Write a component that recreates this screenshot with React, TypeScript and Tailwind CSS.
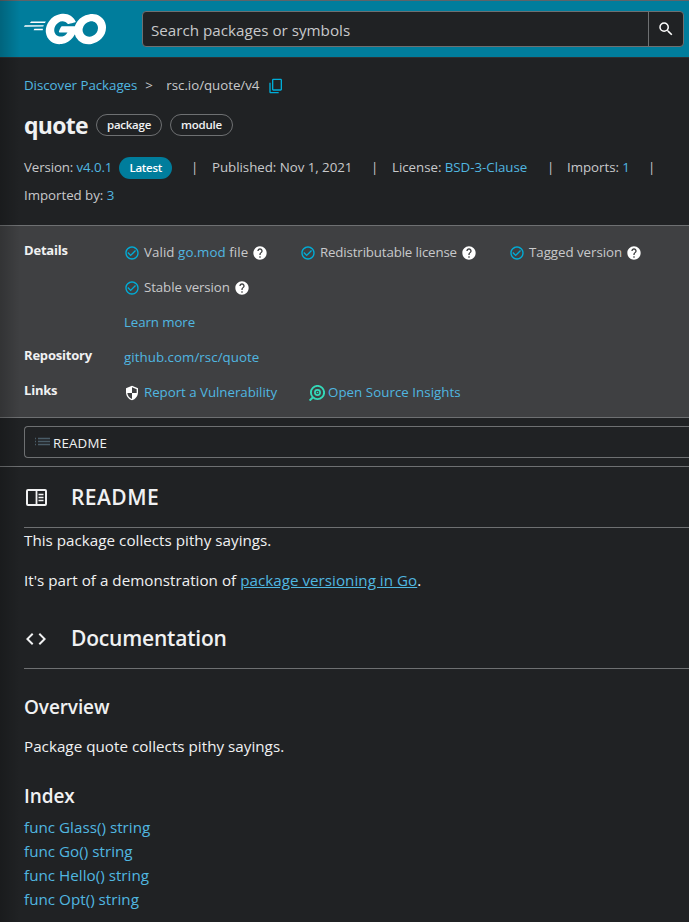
import type { ReactNode } from "react";
import { SiGo } from "react-icons/si";
import { MdSearch, MdContentCopy, MdCheckCircleOutline, MdHelp, MdSecurity, MdCode } from "react-icons/md";

const LINK = "text-[#50b7e0]";

function Check({ children }: { children: ReactNode }) {
  return (
    <div className="flex h-[35px] items-center whitespace-nowrap">
      <MdCheckCircleOutline className="mr-1 size-4 text-[#00add8]" />
      <span>{children}</span>
      <MdHelp className="ml-1 size-4 text-white" />
    </div>
  );
}

function InsightsIcon() {
  return (
    <svg viewBox="0 0 16 16" className="mr-[3px] size-4" fill="none" stroke="#34d9b9">
      <circle cx="8.5" cy="7.5" r="6.6" strokeWidth="1.9" />
      <circle cx="8.5" cy="7.5" r="2.6" strokeWidth="1.7" />
      <circle cx="8.5" cy="7.5" r=".8" fill="#34d9b9" stroke="none" />
      <path d="M.6 15.6 4 12.2" strokeWidth="2" />
    </svg>
  );
}

function ListIcon() {
  return (
    <svg viewBox="0 0 16 12" className="mr-[3px] h-3 w-4" stroke="#4a5c67">
      <path d="M0 2.5h1M3 2.5h12M0 5.5h1M3 5.5h12M0 8.5h1M3 8.5h12" strokeWidth="1.3" />
    </svg>
  );
}

function ReaderIcon() {
  return (
    <svg viewBox="0 0 24 24" className="mr-[23px] size-6" fill="none" stroke="currentColor">
      <rect x="3" y="4" width="19" height="15" rx="1" strokeWidth="2" />
      <path d="M12.5 4v15" strokeWidth="1.8" />
      <path d="M14.5 8.5h5M14.5 11.5h5M14.5 14.5h5" strokeWidth="1.4" />
    </svg>
  );
}

export default function App() {
  return (
    <div className="relative h-[922px] w-[689px] overflow-hidden bg-[#202224] font-['Open_Sans','Noto_Sans',sans-serif] text-[13.3px] tracking-[-0.03px] text-[#c8c9cb]">
      <header className="flex h-[58px] items-start border-t border-b border-t-[#5f6368] border-b-[#2d3033] bg-[#007d9c] pl-6">
        <SiGo viewBox="0 7.5 24 9" className="mt-3 h-[32px] w-[82px] text-white" />
        <div className="mt-[10px] ml-9 flex h-9 w-[542px] rounded border border-[#6e7072] bg-[#202224]">
          <div className="flex flex-1 items-center border-r border-[#6e7072] pt-[2px] pl-2 text-[15.2px] tracking-[0px]">Search packages or symbols</div>
          <div className="flex w-[34px] items-center justify-center"><MdSearch className="size-[18px] text-white" /></div>
        </div>
      </header>

      <section className="h-[167px] px-6">
        <nav className="flex h-[54px] items-center pt-px">
          <span className={LINK}>Discover Packages</span>
          <span className="ml-2 w-[21px]">&gt;</span>
          <span>rsc.io/quote/v4</span>
          <MdContentCopy className="ml-[9px] size-4 -scale-y-100 text-[#00add8]" />
        </nav>
        <div className="flex h-[26px] items-center">
          <h1 className="mr-2 w-16 text-[23px] leading-[24px] font-bold tracking-[-0.75px] text-[#f0f1f2]">quote</h1>
          <span className="mr-2 flex h-[22px] w-[66px] items-center justify-center rounded-full border border-[#6e7072] text-[11.5px] font-semibold tracking-[-0.25px] text-[#f0f1f2]">package</span>
          <span className="flex h-[22px] w-[63px] items-center justify-center rounded-full border border-[#6e7072] text-[11.5px] font-semibold tracking-[-0.25px] text-[#f0f1f2]">module</span>
        </div>
        <div className="mt-4 flex h-7 items-center whitespace-nowrap">
          <div className="flex w-[167px] items-center tracking-[-0.12px]"><span>Version: <span className={LINK}>v4.0.1</span></span><span className="ml-[7px] flex h-[22px] w-[53px] items-center justify-center rounded-full bg-[#007d9c] text-[11.5px] font-semibold tracking-[-0.25px] text-white">Latest</span></div>
          <span className="w-[21px]">|</span>
          <span className="w-[159px]">Published: Nov 1, 2021</span>
          <span className="w-[21px]">|</span>
          <span className="w-[155px]">License: <span className={LINK}>BSD-3-Clause</span></span>
          <span className="w-5">|</span>
          <span className="w-[81px]">Imports: <span className={LINK}>1</span></span>
          <span>|</span>
        </div>
        <div className="flex h-7 items-center whitespace-pre">Imported by: <span className={LINK}>3</span></div>
      </section>

      <section className="flex h-[193px] border-t border-b border-[#6e7072] bg-[#3f4042] px-6 pt-[9px]">
        <div className="w-[100px] text-[13px] font-bold tracking-[-0.2px] text-[#f0f1f2]">
          <div className="flex h-[105px] items-start pt-[5px] leading-5">Details</div>
          <div className="flex h-[35px] items-start pt-[5px] leading-5">Repository</div>
          <div className="flex h-[35px] items-start pt-[5px] leading-5">Links</div>
        </div>
        <div>
          <div className="flex">
            <div className="w-[176px] tracking-[0.08px]"><Check>Valid <span className={LINK}>go.mod</span> file</Check></div>
            <div className="w-[209px] tracking-[-0.15px]"><Check>Redistributable license</Check></div>
            <Check>Tagged version</Check>
          </div>
          <div className="tracking-[-0.1px]"><Check>Stable version</Check></div>
          <div className={`flex h-[35px] items-center tracking-[-0.1px] ${LINK}`}>Learn more</div>
          <div className={`flex h-[35px] items-center tracking-[0.05px] ${LINK}`}>github.com/rsc/quote</div>
          <div className={`flex h-[35px] items-center ${LINK}`}>
            <MdSecurity className="mr-1 size-4 -scale-x-100 text-white" />
            <span className="w-[165px]">Report a Vulnerability</span>
            <InsightsIcon />
            <span className="tracking-[0.05px]">Open Source Insights</span>
          </div>
        </div>
      </section>

      <div className="h-[49px] border-b border-[#6e7072] pt-2 pl-6">
        <div className="flex h-8 items-center rounded-l border border-r-0 border-[#6e7072] pl-[10px] text-[13.3px] tracking-[0.2px] text-[#f0f1f2]">
          <ListIcon /><span className="-ml-px pt-[3px]">README</span>
        </div>
      </div>

      <main className="pl-6 text-[15.2px] tracking-[0.02px] text-[#f0f1f2]">
        <h2 className="flex h-[61px] items-center border-b border-[#6e7072] pt-[2px] text-[21px] font-semibold tracking-[0.45px]">
          <ReaderIcon />README
        </h2>
        <p className="h-10 leading-6">This package collects pithy sayings.</p>
        <p className="h-10 leading-6">It's part of a demonstration of <span className={`${LINK} underline`}>package versioning in Go</span>.</p>
        <h2 className="mt-px flex h-[60px] items-center border-b border-[#6e7072] text-[21px] font-semibold tracking-[-0.2px]">
          <MdCode className="mr-[23px] size-6" />Documentation
        </h2>
        <h3 className="mt-6 h-[41px] text-[19px] leading-[28px] font-semibold tracking-[-0.1px]">Overview</h3>
        <p className="leading-6">Package quote collects pithy sayings.</p>
        <h3 className="mt-6 h-[33px] text-[19px] leading-[28px] font-semibold tracking-[-0.1px]">Index</h3>
        <div className={`leading-6 ${LINK}`}>
          <div>func Glass() string</div>
          <div>func Go() string</div>
          <div>func Hello() string</div>
          <div>func Opt() string</div>
        </div>
      </main>
      <div className="absolute inset-y-0 left-0 w-5 bg-linear-to-r from-black/20 to-transparent" />
    </div>
  );
}
